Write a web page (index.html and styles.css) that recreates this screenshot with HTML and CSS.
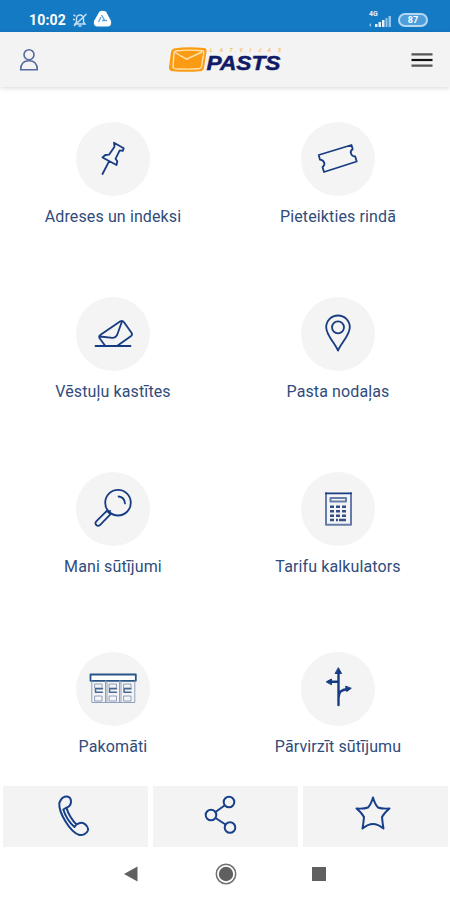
FILE: index.html
```html
<!DOCTYPE html>
<html lang="lv">
<head>
<meta charset="utf-8">
<title>Latvijas Pasts</title>
<link rel="stylesheet" href="styles.css">
</head>
<body>
<div class="status">
  <span class="time">10:02</span>
  <svg class="bell" width="16" height="16" viewBox="0 0 16 16"><path d="M3 12h10l-1.500-2V6.500a3.500 3.500 0 0 0-7 0V10zM6.500 14h3M2 14 14.500 2M1.500 3l2 1M1 7.500h2"/></svg>
  <svg class="drive" width="19" height="18" viewBox="0 0 19 18"><path class="fill" d="M6.500 1.500Q9 0 13 1.500L18 11q1 5-3 5.500H4Q0 16 1 11z"/><path class="cut" d="M8.500 5 12 11M8 7 5.500 12M9 10.500h5"/></svg>
  <span class="grow"></span>
  <svg class="signal" width="24" height="18" viewBox="0 0 24 18"><text x="1" y="6">4G</text><path d="M7 17v-3h2.500v3zM10.500 17v-5H13v5zM14 17v-7h2.500v7z"/><path class="dim" d="M17.500 17V8h2v9zM20.500 17V6H23v11zM1 15l2-2v4z"/></svg>
  <span class="battery">87</span>
</div>
<header class="header">
  <svg class="user" width="20" height="24" viewBox="0 0 20 24"><circle cx="10" cy="6.700" r="5"/><path d="M1.700 21.700h16.600c0-6-3.300-9-8.300-9s-8.300 3-8.300 9z"/></svg>
  <svg class="logo" width="116" height="30" viewBox="0 0 116 30">
    <path class="envelope" d="M7 3.500Q20 1.500 37 3q3 .3 2.500 3.500L37 23q-.6 3-4 3.300-13 1-27 0-4.500-.3-4-4L4 7q.5-3 3-3.500z"/>
    <path class="envline" d="M8.500 6Q21 4.500 35 5.700q2 .2 1.700 2L34.700 21q-.4 2.500-3 2.700-11 .8-23 0-3-.3-2.600-2.700L7 8q.3-2 1.500-2zM8 7.500l11.500 6.700L35 7"/>
    <text class="latvijas" x="43" y="6.500" textLength="71">LATVIJAS</text>
    <text class="pasts" x="39.500" y="25" textLength="74" lengthAdjust="spacingAndGlyphs">PASTS</text>
  </svg>
  <svg class="burger" width="22" height="16" viewBox="0 0 22 16"><path class="soft" d="M.5 2.300h21M.5 13.700h21"/><path d="M.5 8h21"/></svg>
</header>
<main class="grid">
  <a class="tile"><span class="disc"><svg viewBox="0 0 74 74"><path d="M38 20.700l9.700 5.600-1 2.500-3-.5-4.200 8.500 1.800 2.500-.8 3.700-14-7.500 2.800-2.500 3.700-.3 5.500-8zM33 39.300 26.500 52"/></svg></span><span class="label">Adreses un indeksi</span></a>
  <a class="tile"><span class="disc"><svg viewBox="0 0 74 74"><path d="M17.700 33 50.500 23l1.200 4.300c-4 2.200-1.200 7.300 2.500 7.200l1.500 5L23 50l-1.500-5c3.700-2.200 1.500-7-2.500-7.300z"/></svg></span><span class="label">Pieteikties rindā</span></a>
  <a class="tile"><span class="disc"><svg viewBox="0 0 74 74"><path d="M19.500 49h35M29 48.500l-5.400-7.200q-1.200-2.300 1-3.600L44 24.500q2.500-1.500 4 .7l7.500 10.500q1.300 2-.7 3.500L41 49M24 39.500l12.500 1.300q3 .2 4.500-2.500L45.800 25"/></svg></span><span class="label">Vēstuļu kastītes</span></a>
  <a class="tile"><span class="disc"><svg viewBox="0 0 74 74"><path d="M37 53.500C33 45 25.200 38 25.200 30.300a11.800 11.800 0 0 1 23.600 0C48.800 38 41 45 37 53.500z"/><circle cx="37" cy="30.300" r="6"/></svg></span><span class="label">Pasta nodaļas</span></a>
  <a class="tile"><span class="disc"><svg viewBox="0 0 74 74"><circle cx="42" cy="30.700" r="12.800"/><path d="M42.500 24.500q6 .5 6.500 7M30.800 38.800l3.800 3.400L23.700 53.300q-1.900 1.200-3.400-.3t-.3-3.300zM32.500 40.500l1.600-1.600"/></svg></span><span class="label">Mani sūtījumi</span></a>
  <a class="tile"><span class="disc"><svg viewBox="0 0 74 74"><path class="grey" d="M25 21v31.700h25V21M29.500 26h15.500v3.600H29.500z"/><path d="M25 21.300h25"/><path class="keys" d="M29 34.700h4m2 0h4m2 0h4M29 39.200h4m2 0h4m2 0h4M29 43.700h4m2 0h4m2 0h4M29 48h4m2 0h2m1 0h7"/></svg></span><span class="label">Tarifu kalkulators</span></a>
  <a class="tile"><span class="disc"><svg viewBox="0 0 74 74"><path class="roof" d="M14.500 22.500h45.300v6.300H14.500z"/><path class="locker" d="M15.800 29v21.500h43V29M29.500 29v21.500M31 29v21.500M43.500 29v21.500M45 29v21.500M19 32h7v4h-7zM33.500 32h7v4h-7zM48 32h7v4h-7zM19 44h7v5h-7zM33.500 44h7v5h-7zM48 44h7v5h-7z"/><path class="slots" d="M26.500 36.800h-7v3.500h7M40.500 36.800h-7v3.500h7M55 36.800h-7v3.500h7"/></svg></span><span class="label">Pakomāti</span></a>
  <a class="tile"><span class="disc"><svg viewBox="0 0 74 74"><path class="road" d="M37.500 53V19M37.500 29.700H28M37.500 46c0-6.500 3-8 9-9"/><path class="tips" d="M37.500 16l3 5.500h-6zM25.500 29.700l5-2.700v5.400zM50 36.500l-4.300 3-1-5z"/></svg></span><span class="label">Pārvirzīt sūtījumu</span></a>
</main>
<nav class="tabs">
  <a class="tab"><svg width="36" height="46" viewBox="0 0 36 46"><path d="M4.500 7.500C6 4.500 9 3.300 11.300 3.500q3.700.7 3.700 5c0 3.500-1.300 5-4.500 6.200C12 21 17 28.300 20.500 31.500c2-1.300 5.300-2.700 7.800-.8 2.200 1.500 4.200 4.500 3.600 6.800-1.200 3.200-5 5-8.500 4.500C14 39 2.500 19.500 3.300 10zM10.500 14.700l-3.200 1.800C9.500 23.500 14.500 30.500 18.500 34l2-2.500"/></svg></a>
  <a class="tab"><svg width="36" height="46" viewBox="0 0 36 46"><circle cx="26" cy="9" r="5.300"/><circle cx="8" cy="22" r="5.300"/><circle cx="27" cy="34.500" r="5.300"/><path d="M12.500 19 21.500 12.500M12.500 25 22.500 31.500"/></svg></a>
  <a class="tab"><svg width="36" height="46" viewBox="0 0 36 46"><path d="M18 4.500Q20 11.500 23 14.500 27 16 34.500 15.500 29 20 27 24 27.500 30 28.500 35.500 23 31 18 31 13 31 7.500 35.500 8.500 30 9 24 7 20 1.500 15.500 9 16 13 14.500 16 11.500 18 4.500z"/></svg></a>
</nav>
<footer class="system">
  <svg width="14" height="16" viewBox="0 0 14 16"><path d="M0 8 13.500.500v15z"/></svg>
  <svg width="22" height="22" viewBox="0 0 22 22"><circle class="ring" cx="11" cy="11" r="9.700"/><circle cx="11" cy="11" r="7.200"/></svg>
  <svg width="14" height="14" viewBox="0 0 14 14"><path d="M0 0h14v14H0z"/></svg>
</footer>
</body>
</html>
```
FILE: styles.css
```css
* { box-sizing: border-box; }
body {
  margin: 0;
  height: 900px;
  display: flex;
  flex-direction: column;
  background: #fff;
  font-family: Roboto, "Liberation Sans", sans-serif;
  overflow: hidden;
}
svg { display: block; fill: none; }

.status {
  height: 32px;
  flex: none;
  display: flex;
  align-items: center;
  padding: 8px 22px 0 29px;
  background: #147ac4;
  color: #fff;
}
.time { width: 37px; font-size: 14px; font-weight: 700; letter-spacing: 0.2px; }
.bell { margin-left: 6px; stroke: #c5e0f3; stroke-width: 1.4; }
.drive { margin-left: 5px; margin-top: -3px; }
.drive .fill { fill: #fff; }
.drive .cut { stroke: #5fa5da; stroke-width: 1.3; }
.grow { flex: 1; }
.signal { margin-top: -3px; fill: #e4f1fb; }
.signal text { font-size: 7px; font-weight: 700; }
.signal .dim { fill: #93c4e8; }
.battery {
  width: 30px;
  height: 14px;
  margin-left: 6px;
  border: 2px solid #b5d8f2;
  border-radius: 7px;
  background: #4d9edb;
  font-size: 9px;
  font-weight: 700;
  line-height: 10px;
  text-align: center;
}

.header {
  height: 55px;
  flex: none;
  display: flex;
  align-items: center;
  justify-content: space-between;
  padding: 0 17px 0 19px;
  background: #f3f3f3;
  box-shadow: 0 1px 5px rgba(0, 0, 0, 0.16);
}
.user { stroke: #566b9f; stroke-width: 1.6; }
.envelope { fill: #fb9b14; }
.envline { stroke: #ffe3ae; stroke-width: 1.4; }
.latvijas { fill: #f6c05f; font-size: 5px; font-weight: 700; font-style: italic; }
.pasts { fill: #111a67; font: italic 700 21px "Liberation Sans", sans-serif; stroke: #111a67; stroke-width: 0.5; }
.burger { stroke: #111; stroke-width: 2.2; }
.burger .soft { stroke: #555; }

.grid {
  height: 699px;
  flex: none;
  display: grid;
  grid-template-columns: 1fr 1fr;
  grid-template-rows: 175px 175px 180px auto;
  padding-top: 35px;
}
.tile { display: flex; flex-direction: column; align-items: center; }
.disc { width: 74px; height: 74px; border-radius: 50%; background: #f4f4f4; }
.disc svg {
  width: 74px;
  height: 74px;
  stroke: #173c82;
  stroke-width: 1.8;
  stroke-linejoin: round;
  stroke-linecap: round;
}
.disc .grey { stroke: #667cab; stroke-width: 2; }
.disc .keys { stroke: #334d8b; stroke-width: 2.4; stroke-linecap: butt; }
.disc .roof { stroke: #285487; fill: #fff; }
.disc .locker { stroke: #8e9ebd; stroke-width: 1; }
.disc .slots { stroke: #476894; stroke-width: 1.5; }
.disc .road { stroke-width: 2.4; }
.disc .tips { fill: #173c82; stroke-width: 1; }
.label {
  margin-top: 11px;
  padding-left: 1px;
  color: #304c7b;
  font-size: 16px;
  line-height: 20px;
  letter-spacing: 0.12px;
  white-space: nowrap;
}

.tabs {
  height: 62px;
  flex: none;
  display: grid;
  grid-template-columns: 145px 145px 145px;
  gap: 5px;
  padding: 0 0 1px 3px;
}
.tab { display: flex; justify-content: center; padding-top: 7px; background: #f3f3f3; }
.tab svg { stroke: #17408a; stroke-width: 2; stroke-linejoin: round; }
.tab:nth-child(1) svg { margin-left: -4px; }
.tab:nth-child(2) svg { margin-left: -10px; }
.tab:nth-child(3) svg { margin-left: -5px; }

.system {
  height: 52px;
  flex: none;
  display: flex;
  align-items: center;
  padding-left: 124px;
}
.system svg { fill: #606060; }
.system svg + svg { margin-left: 77px; }
.system svg:last-child { margin-left: 75px; }
.system .ring { fill: none; stroke: #707070; stroke-width: 1.5; }
```
